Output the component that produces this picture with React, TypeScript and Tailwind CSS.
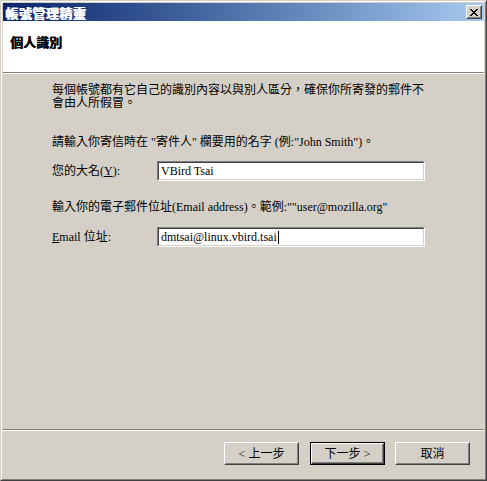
import React from "react";

function RaisedButton({
  label,
  isDefault = false,
  className = "",
}: {
  label: string;
  isDefault?: boolean;
  className?: string;
}) {
  return (
    <div className={`h-[23px] ${isDefault ? "border border-black" : ""} ${className}`}>
      <div className="h-full border border-t-white border-l-white border-b-[#404040] border-r-[#404040]">
        <div className="h-full flex items-center justify-center border border-t-[#d4d0c8] border-l-[#d4d0c8] border-b-[#808080] border-r-[#808080] bg-[#d4d0c8] text-[12px] leading-none text-black">
          {label}
        </div>
      </div>
    </div>
  );
}

function SunkenInput({ value, caret = false }: { value: string; caret?: boolean }) {
  return (
    <div className="w-[268px] h-[20px] border border-t-[#808080] border-l-[#808080] border-b-white border-r-white">
      <div className="h-full border border-t-[#404040] border-l-[#404040] border-b-[#d4d0c8] border-r-[#d4d0c8] bg-white flex items-center pl-[2px]">
        <span className="text-[12px] leading-none text-black whitespace-pre">{value}</span>
        {caret && <span className="ml-[1px] w-[1px] h-[13px] bg-black" />}
      </div>
    </div>
  );
}

export default function App() {
  return (
    <div className="w-[487px] h-[481px] font-['Liberation_Serif','Noto_Sans_CJK_TC',serif] select-none">
      {/* window frame */}
      <div className="h-full border border-t-[#d4d0c8] border-l-[#d4d0c8] border-b-[#404040] border-r-[#404040]">
        <div className="h-full border border-t-white border-l-white border-b-[#808080] border-r-[#808080]">
          <div className="h-full border border-[#d4d0c8] bg-[#d4d0c8] flex flex-col">
            {/* title bar */}
            <div className="h-[18px] flex items-center justify-between bg-gradient-to-r from-[#0a246a] to-[#a6caf0] pl-[2px] pr-[2px]">
              <span className="text-[13px] leading-none font-bold text-white font-['Noto_Sans_CJK_TC',sans-serif] tracking-[0.5px] [text-shadow:1px_0_0_#fff]">
                帳號管理精靈
              </span>
              <div className="w-[16px] h-[14px] border border-t-white border-l-white border-b-[#404040] border-r-[#404040]">
                <div className="h-full border border-t-[#d4d0c8] border-l-[#d4d0c8] border-b-[#808080] border-r-[#808080] bg-[#d4d0c8] flex items-center justify-center">
                  <svg width="8" height="7" viewBox="0 0 8 7" shapeRendering="crispEdges">
                    <path d="M0 0h2v1H0zM6 0h2v1H6zM1 1h2v1H1zM5 1h2v1H5zM2 2h4v1H2zM3 3h2v1H3zM2 4h4v1H2zM1 5h2v1H1zM5 5h2v1H5zM0 6h2v1H0zM6 6h2v1H6z" fill="#000" />
                  </svg>
                </div>
              </div>
            </div>

            {/* header */}
            <div className="h-[51px] bg-white pl-[7px] pt-[9px]">
              <span className="text-[13px] leading-[16px] font-bold text-black font-['Noto_Sans_CJK_TC',sans-serif] [text-shadow:0.5px_0_0_#000]">
                個人識別
              </span>
            </div>
            <div className="h-[1px] bg-[#808080]" />
            <div className="h-[1px] bg-white" />

            {/* body */}
            <div className="flex-1 pl-[49px] pt-[10px] text-[12px] leading-[13px] text-black">
              <p className="w-[375px]">
                每個帳號都有它自己的識別內容以與別人區分，確保你所寄發的郵件不會由人所假冒。
              </p>
              <p className="mt-[26px]">請輸入你寄信時在 "寄件人" 欄要用的名字 (例:"John Smith")。</p>
              <div className="mt-[12px] flex items-center">
                <span className="w-[105px]">
                  您的大名(<span className="underline underline-offset-1">Y</span>):
                </span>
                <SunkenInput value="VBird Tsai" />
              </div>
              <p className="mt-[20px]">輸入你的電子郵件位址(Email address)。範例:""user@mozilla.org"</p>
              <div className="mt-[13px] flex items-center">
                <span className="w-[105px]">
                  <span className="underline underline-offset-1">E</span>mail 位址:
                </span>
                <SunkenInput value="dmtsai@linux.vbird.tsai" caret />
              </div>
            </div>

            {/* footer */}
            <div className="h-[1px] bg-[#808080]" />
            <div className="h-[1px] bg-white" />
            <div className="h-[47px] flex items-start justify-end pt-[11px] pr-[14px]">
              <RaisedButton label="< 上一步" className="w-[75px]" />
              <RaisedButton label="下一步 >" isDefault className="w-[75px] ml-[11px]" />
              <RaisedButton label="取消" className="w-[75px] ml-[10px]" />
            </div>
          </div>
        </div>
      </div>
    </div>
  );
}
